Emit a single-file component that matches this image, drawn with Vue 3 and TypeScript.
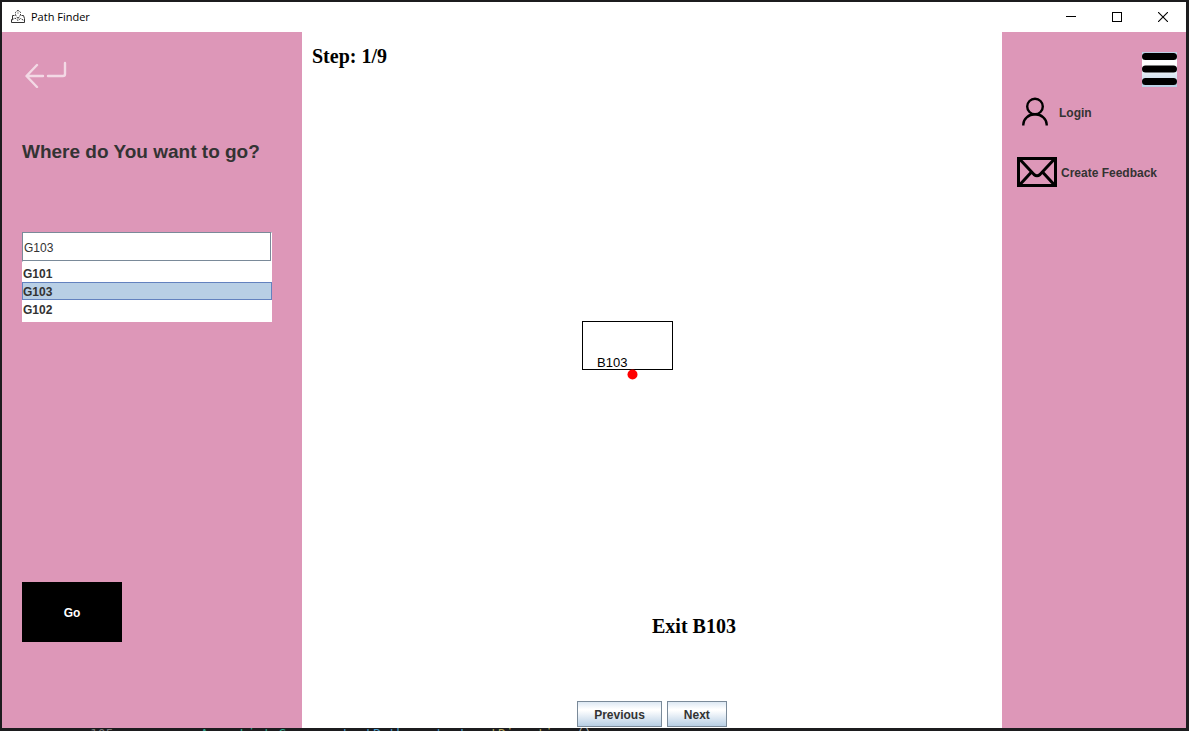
<script setup lang="ts">
import { computed, ref } from 'vue'

const rooms = ['G101', 'G103', 'G102']
const destination = ref('G103')
const total = 9
const step = ref(1)
const stepLabel = computed(() => `Step: ${step.value}/${total}`)

function move(delta: number) {
  step.value = Math.min(total, Math.max(1, step.value + delta))
}
</script>

<template>
  <div class="desktop">
    <div class="window">
      <header class="titlebar">
        <svg class="app-icon" width="14" height="14" viewBox="0 0 14 14" fill="none" stroke="#333" aria-hidden="true">
          <path d="M3.500 5.500H1.500V9L.5 9.500v3h13v-4l-1-3h-2" />
          <path d="M7 8.500 4.500 5V2.500L6 .7h2l1.500 1.800V5Z" stroke-dasharray="2 1" />
          <path d="M1 10l3-2 3 2.500 2.500-2 3.500 2M6.500 3h1" stroke-dasharray="2 1" />
        </svg>
        <h1 class="title">Path Finder</h1>
        <button class="caption-btn" aria-label="Minimize">
          <svg width="10" height="10" shape-rendering="crispEdges"><path d="M0 4.500h10" stroke="#000" /></svg>
        </button>
        <button class="caption-btn" aria-label="Maximize">
          <svg width="10" height="10" shape-rendering="crispEdges"><path d="M.5.5h9v9h-9z" fill="none" stroke="#000" /></svg>
        </button>
        <button class="caption-btn" aria-label="Close">
          <svg width="10" height="10"><path d="M0 0l10 10M10 0L0 10" stroke="#000" stroke-width="1.100" /></svg>
        </button>
      </header>

      <div class="content">
        <aside class="search">
          <button class="back" aria-label="Back">
            <svg width="44" height="28" viewBox="0 0 44 28" fill="none" stroke="#f3d9e5" stroke-width="2.400" stroke-linecap="round" stroke-linejoin="round">
              <path d="M13 5 2.500 16 13 27M3 16h16M24 16h15q2 0 2-2V3" />
            </svg>
          </button>
          <h2 class="question"><label for="destination">Where do You want to go?</label></h2>
          <input id="destination" v-model="destination" class="field" type="text" autocomplete="off" />
          <ul class="rooms" role="listbox" aria-label="Rooms">
            <li
              v-for="room in rooms"
              :key="room"
              role="option"
              :aria-selected="room === destination"
              :class="['room', { selected: room === destination }]"
              @click="destination = room"
            >{{ room }}</li>
          </ul>
          <button class="go">Go</button>
        </aside>

        <main class="map">
          <p class="step">{{ stepLabel }}</p>
          <div class="stage">
            <svg class="plan" width="92" height="60" role="img" aria-label="Room B103">
              <rect x=".5" y=".5" width="90" height="48" fill="none" stroke="#000" shape-rendering="crispEdges" />
              <text x="15" y="46" class="plan-label">B103</text>
              <circle cx="50.500" cy="53.500" r="5" fill="#f00" />
            </svg>
          </div>
          <p class="instruction">Exit B103</p>
          <div class="pager">
            <button class="metal" @click="move(-1)">Previous</button>
            <button class="metal" @click="move(1)">Next</button>
          </div>
        </main>

        <nav class="menu">
          <button class="burger" aria-label="Menu">
            <svg width="35" height="35" viewBox="0 0 35 35" stroke="#000" stroke-width="7" stroke-linecap="round" aria-hidden="true">
              <path d="M3.500 4.500h28M3.500 17h28M3.500 29.500h28" />
            </svg>
          </button>
          <button class="entry login">
            <svg width="40" height="30" viewBox="0 0 40 30" fill="none" stroke="#000" stroke-width="2.400" aria-hidden="true">
              <circle cx="18" cy="9.500" r="7.800" />
              <path d="M6.300 28.500v-1a11.700 10.200 0 0 1 23.400 0v1" />
            </svg>
            <span class="entry-text">Login</span>
          </button>
          <button class="entry">
            <svg width="40" height="30" viewBox="0 0 40 30" fill="none" stroke="#000" stroke-width="3" aria-hidden="true">
              <path d="M1.500 1.500h37v27h-37z" />
              <path d="M3 2.500l14 15q3 2.500 6 0L37 2.500M3 27.500 14.500 15M37 27.500 25.500 15" />
            </svg>
            <span class="entry-text">Create Feedback</span>
          </button>
        </nav>
      </div>
    </div>
    <div class="editor" aria-hidden="true">
      <span class="line-no">105</span>
      <span><span class="type">ArrayList</span>&lt;<span class="type">Space</span>&gt; <span class="variable">startPath</span> = <span class="variable">start</span>.<span class="method">getDirections</span>();</span>
    </div>
  </div>
</template>

<style>
body {
  background: #1c1c1e;
}
</style>

<style scoped>
.desktop {
  box-sizing: border-box;
  height: 100vh;
  padding: 2px 3px 0 2px;
  display: flex;
  flex-direction: column;
  overflow: hidden;
  background: #1c1c1e;
  color: #333;
  font: bold 12px/18px "Liberation Sans", Arial, sans-serif;
}
button {
  padding: 0;
  border: 0;
  background: none;
  color: inherit;
  font: inherit;
}
svg {
  display: block;
}
h1, h2, p, ul {
  margin: 0;
  padding: 0;
}
.window {
  flex: 1;
  min-height: 0;
  display: flex;
  flex-direction: column;
  background: #fff;
}
.titlebar {
  height: 30px;
  display: flex;
  align-items: center;
  padding-left: 9px;
}
.title {
  flex: 1;
  margin-left: 6px;
  color: #000;
  font: 11px/18px "Open Sans", "Noto Sans", sans-serif;
}
.caption-btn {
  width: 46px;
  height: 30px;
  display: grid;
  place-items: center;
}
.content {
  flex: 1;
  min-height: 0;
  display: grid;
  grid-template-columns: 300px 1fr 184px;
}
.search {
  display: flex;
  flex-direction: column;
  padding: 28px 30px 0 20px;
  background: #dd97b8;
}
.back {
  align-self: flex-start;
  margin-left: 2px;
}
.question {
  margin-top: 52px;
  font-size: 19px;
  line-height: 24px;
  white-space: nowrap;
}
.field {
  box-sizing: border-box;
  width: 100%;
  height: 30px;
  margin-top: 68px;
  padding: 2px 1px 0;
  border: 1px solid #7a8a99;
  border-right-color: #fff;
  border-bottom-color: #fff;
  box-shadow: inset -1px -1px #7a8a99;
  background: #fff;
  color: #333;
  font: 12px/18px "Liberation Sans", Arial, sans-serif;
  outline: 0;
}
.rooms {
  list-style: none;
  padding: 2px 0 4px;
  background: #fff;
}
.room {
  box-sizing: border-box;
  height: 18px;
  border: 1px solid transparent;
  line-height: 18px;
}
.selected {
  border-color: #6382bf;
  background: #b8cfe5;
}
.go {
  width: 100px;
  height: 60px;
  margin-top: auto;
  margin-bottom: 86px;
  padding-top: 2px;
  background: #000;
  color: #fff;
}
.map {
  display: flex;
  flex-direction: column;
  min-width: 0;
}
.step,
.instruction {
  color: #000;
  font: bold 20px/24px "Liberation Serif", "Times New Roman", serif;
}
.step {
  padding: 12px 10px 0;
}
.stage {
  flex: 1;
  position: relative;
}
.plan {
  position: absolute;
  top: 253px;
  left: calc(50% - 70px);
}
.plan-label {
  font: 13px "Liberation Sans", Arial, sans-serif;
}
.instruction {
  padding-left: 50%;
}
.pager {
  display: flex;
  justify-content: center;
  gap: 5px;
  padding: 63px 0 1px;
}
.metal {
  height: 26px;
  padding: 2px 16px 0;
  border: 1px solid #7a8a99;
  background: linear-gradient(#dde8f3, #fff 30%, #fff 35%, #b8cfe5);
}
.menu {
  display: flex;
  flex-direction: column;
  align-items: flex-start;
  padding: 20px 9px 0 15px;
  background: #dd97b8;
}
.burger {
  align-self: flex-end;
  background: linear-gradient(#b8cfe5, #fff 25%, #fff 35%, #b8cfe5);
}
.entry {
  display: flex;
  align-items: center;
  gap: 4px;
  white-space: nowrap;
}
.entry-text {
  padding-top: 2px;
}
.login {
  gap: 2px;
  margin: 10px 0 30px;
}
.editor {
  height: 3px;
  display: flex;
  gap: 87px;
  padding-left: 88px;
  overflow: hidden;
  color: #aaa;
  font: 13px/11px "DejaVu Sans Mono", monospace;
  white-space: nowrap;
}
.line-no {
  color: #777;
}
.type {
  color: #2fa58c;
}
.variable {
  color: #4b9ccc;
}
.method {
  color: #b5a95c;
}
</style>
